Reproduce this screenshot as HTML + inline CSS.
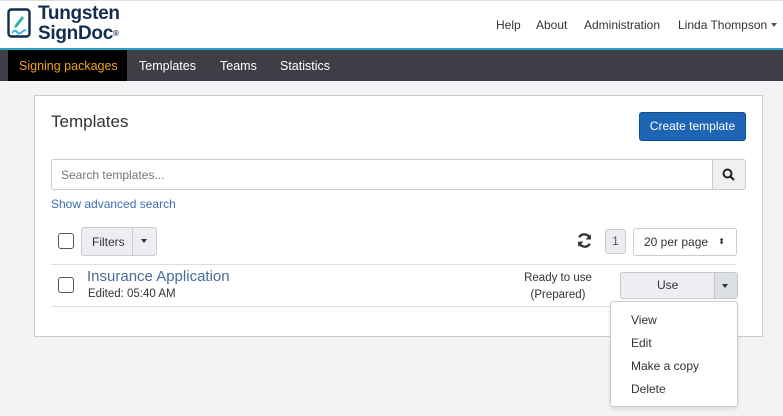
<!DOCTYPE html>
<html><head><style>
*{box-sizing:border-box;margin:0;padding:0}
body{width:783px;height:416px;overflow:hidden;background:#f3f3f6;font-family:"Liberation Sans",sans-serif;font-size:12.5px;color:#333;position:relative}
.a{position:absolute}
.hdr{left:0;top:0;width:783px;height:49px;background:#fff;border-top:1px solid #ddd;border-bottom:1px solid #2aa0c8}
.nav{left:0;top:49px;width:783px;height:32px;background:#3e3f46;border-top:1px solid #2aa0c8}
.nav span{position:absolute;top:9px;color:#fff;font-size:12.5px}
.panel{left:34px;top:95px;width:729px;height:242px;background:#fff;border:1px solid #ccc}
.cb{width:16px;height:16px;border:1.5px solid #555;border-radius:3px;background:#fff}
.menu a{position:absolute;left:20px;color:#333;font-size:12px}
</style></head><body>
<div class="a hdr">
 <svg class="a" style="left:7px;top:7px" width="24" height="30" viewBox="0 0 24 30"><rect x="1.5" y="1.5" width="21" height="27" rx="3" fill="none" stroke="#0f2c4f" stroke-width="2.4"/><path d="M8 17 L15 8 L17 10 L10 19 L7 20 Z" fill="#1fb5a6"/><path d="M5 25 q3 -4 5 -1 t5 0 t4 -1" fill="none" stroke="#2ab8e0" stroke-width="1.8"/></svg>
 <div class="a" style="left:38px;top:3px;font-weight:bold;font-size:19px;line-height:20px;color:#112d50;letter-spacing:-0.3px">Tungsten<br>SignDoc<sup style="font-size:8px;vertical-align:top">®</sup></div>
 <span class="a" style="left:496px;top:17px;font-size:12px">Help</span>
 <span class="a" style="left:536px;top:17px;font-size:12px">About</span>
 <span class="a" style="left:584px;top:17px;font-size:12px">Administration</span>
 <span class="a" style="left:678px;top:17px;font-size:12px">Linda Thompson</span>
 <span class="a" style="left:771px;top:22px;border:3.5px solid transparent;border-top:4px solid #555;width:0;height:0"></span>
</div>
<div class="a nav">
 <div class="a" style="left:8px;top:0;width:119px;height:31px;background:#000"></div>
 <span style="left:19px;color:#f0a020">Signing packages</span>
 <span style="left:139px">Templates</span>
 <span style="left:220px">Teams</span>
 <span style="left:280px">Statistics</span>
</div>
<div class="a panel">
 <div class="a" style="left:16px;top:16px;font-size:17px;color:#333">Templates</div>
 <div class="a" style="left:604px;top:16px;width:107px;height:29px;background:#1f65b5;border:1px solid #164d8c;border-radius:3px;color:#fff;font-size:12px;text-align:center;line-height:27px">Create template</div>
 <div class="a" style="left:16px;top:63px;width:695px;height:31px;border:1px solid #ccc;border-radius:3px"></div>
 <div class="a" style="left:26px;top:72px;color:#777;font-size:12px">Search templates...</div>
 <div class="a" style="left:677px;top:63px;width:34px;height:31px;background:#f0f0f3;border:1px solid #ccc;border-radius:0 3px 3px 0"></div>
 <svg class="a" style="left:687px;top:72px" width="13" height="13" viewBox="0 0 13 13"><circle cx="5.5" cy="5.5" r="4" fill="none" stroke="#222" stroke-width="2"/><path d="M8.5 8.5 L12 12" stroke="#222" stroke-width="2.2"/></svg>
 <div class="a" style="left:16px;top:101px;color:#3c6db0;font-size:12px">Show advanced search</div>
 <div class="a cb" style="left:23px;top:137px"></div>
 <div class="a" style="left:46px;top:131px;width:76px;height:29px;background:#eceef2;border:1px solid #ccc;border-radius:3px"></div>
 <div class="a" style="left:97px;top:131px;width:1px;height:29px;background:#ccc"></div>
 <div class="a" style="left:57px;top:139px;font-size:12px">Filters</div>
 <span class="a" style="left:106px;top:143px;border:3.5px solid transparent;border-top:4px solid #333;width:0;height:0"></span>
 <svg class="a" style="left:541px;top:136px" width="17" height="17" viewBox="0 0 16 16"><path d="M13 6 A5.5 5.5 0 0 0 3 5" fill="none" stroke="#333" stroke-width="2.2"/><path d="M3 10 A5.5 5.5 0 0 0 13 11" fill="none" stroke="#333" stroke-width="2.2"/><path d="M14 2 v5 h-5z M2 14 v-5 h5z" fill="#333"/></svg>
 <div class="a" style="left:570px;top:133px;width:21px;height:25px;background:#ececf0;border:1px solid #ccc;border-radius:3px;text-align:center;line-height:23px;font-size:12px;color:#555">1</div>
 <div class="a" style="left:598px;top:132px;width:104px;height:28px;border:1px solid #ccc;border-radius:3px;font-size:12px;line-height:26px;padding-left:10px">20 per page<span style="position:absolute;right:11px;top:0;font-size:8px">⬍</span></div>
 <div class="a" style="left:16px;top:168px;width:685px;height:1px;background:#ddd"></div>
 <div class="a cb" style="left:23px;top:181px"></div>
 <div class="a" style="left:52px;top:172px;font-size:15px;color:#4a6a98">Insurance Application</div>
 <div class="a" style="left:53px;top:192px;font-size:11.5px;color:#333">Edited: 05:40 AM</div>
 <div class="a" style="left:463px;top:174px;width:120px;text-align:center;font-size:11.5px;line-height:17px">Ready to use<br>(Prepared)</div>
 <div class="a" style="left:585px;top:176px;width:118px;height:27px;background:#eceef2;border:1px solid #c8c8cc;border-radius:3px"></div>
 <div class="a" style="left:679px;top:177px;width:23px;height:25px;background:#dcdfe4;border-left:1px solid #c8c8cc"></div>
 <div class="a" style="left:622px;top:182px;font-size:12px">Use</div>
 <span class="a" style="left:687px;top:188px;border:3.5px solid transparent;border-top:4px solid #333;width:0;height:0"></span>
 <div class="a" style="left:16px;top:210px;width:685px;height:1px;background:#ddd"></div>
</div>
<div class="a menu" style="left:610px;top:301px;width:128px;height:106px;background:#fff;border:1px solid #ccc;border-radius:3px;box-shadow:0 2px 4px rgba(0,0,0,.1)">
 <a style="top:11px">View</a><a style="top:34px">Edit</a><a style="top:57px">Make a copy</a><a style="top:80px">Delete</a>
</div>
</body></html>
